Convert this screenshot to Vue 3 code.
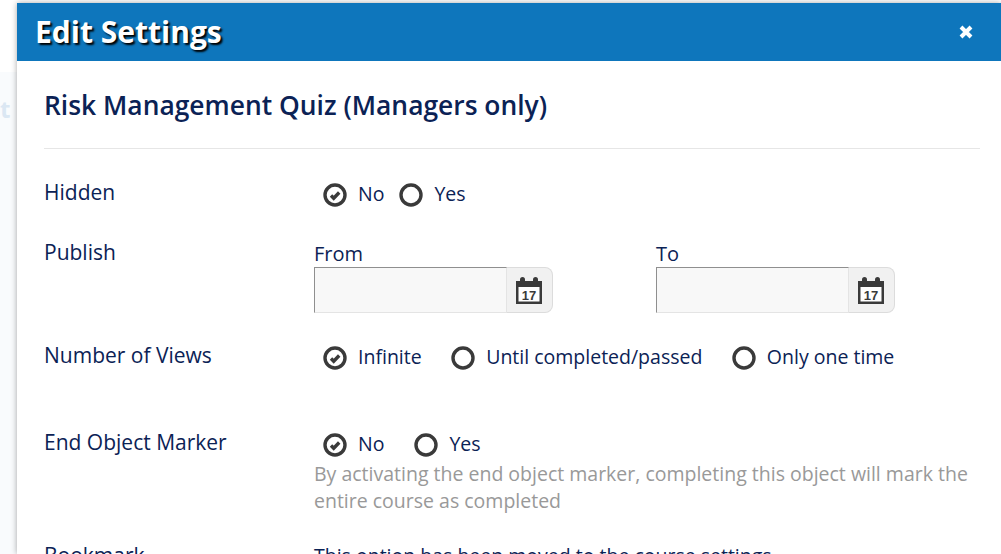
<script setup>
const views = [
  { label: 'Infinite', checked: true },
  { label: 'Until completed/passed', checked: false },
  { label: 'Only one time', checked: false }
]
</script>

<template>
  <div class="page">
    <div class="behind">
      <span class="behind-text">t</span>
    </div>
    <div class="modal">
      <header class="modal-head">
        <h1>Edit Settings</h1>
        <svg class="close" viewBox="0 0 16 16"><path d="M3 3l10 10M13 3L3 13" /></svg>
      </header>
      <div class="modal-body">
        <h2>Risk Management Quiz (Managers only)</h2>
        <hr>
        <div class="row row-hidden">
          <div class="label">Hidden</div>
          <div class="radios tight">
            <label class="radio"><svg class="ic" viewBox="0 0 24 24"><circle cx="12" cy="12" r="10" /><path d="M8 12.5l2.7 2.7 5.5-5.7" /></svg>No</label>
            <label class="radio"><svg class="ic" viewBox="0 0 24 24"><circle cx="12" cy="12" r="10" /></svg>Yes</label>
          </div>
        </div>
        <div class="row row-publish">
          <div class="label">Publish</div>
          <div class="dates">
            <div class="date">
              <div class="date-label">From</div>
              <div class="date-box">
                <div class="date-input"></div>
                <div class="date-btn">
                  <svg class="cal" viewBox="0 0 28 28">
                    <path class="cal-body" d="M1 5h26v23H1z" />
                    <rect x="5" y="1" width="5" height="7" rx="2.5" />
                    <rect x="18" y="1" width="5" height="7" rx="2.5" />
                    <rect class="cal-page" x="3.5" y="11" width="21" height="14.5" />
                    <text x="14" y="23.5" text-anchor="middle">17</text>
                  </svg>
                </div>
              </div>
            </div>
            <div class="date">
              <div class="date-label">To</div>
              <div class="date-box">
                <div class="date-input"></div>
                <div class="date-btn">
                  <svg class="cal" viewBox="0 0 28 28">
                    <path class="cal-body" d="M1 5h26v23H1z" />
                    <rect x="5" y="1" width="5" height="7" rx="2.5" />
                    <rect x="18" y="1" width="5" height="7" rx="2.5" />
                    <rect class="cal-page" x="3.5" y="11" width="21" height="14.5" />
                    <text x="14" y="23.5" text-anchor="middle">17</text>
                  </svg>
                </div>
              </div>
            </div>
          </div>
        </div>
        <div class="row row-views">
          <div class="label">Number of Views</div>
          <div class="radios wide">
            <label v-for="v in views" :key="v.label" class="radio">
              <svg class="ic" viewBox="0 0 24 24"><circle cx="12" cy="12" r="10" /><path v-if="v.checked" d="M8 12.5l2.7 2.7 5.5-5.7" /></svg>{{ v.label }}
            </label>
          </div>
        </div>
        <div class="row row-marker">
          <div class="label">End Object Marker</div>
          <div class="field">
            <div class="radios mid">
              <label class="radio"><svg class="ic" viewBox="0 0 24 24"><circle cx="12" cy="12" r="10" /><path d="M8 12.5l2.7 2.7 5.5-5.7" /></svg>No</label>
              <label class="radio"><svg class="ic" viewBox="0 0 24 24"><circle cx="12" cy="12" r="10" /></svg>Yes</label>
            </div>
            <p class="hint">By activating the end object marker, completing this object will mark the entire course as completed</p>
          </div>
        </div>
        <div class="row row-bookmark">
          <div class="label">Bookmark</div>
          <div class="field note">This option has been moved to the course settings</div>
        </div>
      </div>
    </div>
  </div>
</template>

<style>
html, body { margin: 0; overflow: hidden; background: #fff; }
</style>

<style scoped>
.page { position: relative; width: 1001px; height: 554px; overflow: hidden; background: #fff; font-family: "Open Sans", "Liberation Sans", sans-serif; color: #0b2255; padding-top: 3px; box-sizing: border-box; }
.behind { position: absolute; left: 0; top: 72px; width: 17px; height: 482px; background: #f9fbfd; }
.behind-text { position: absolute; left: 0; top: 23px; font-size: 24px; font-weight: 700; line-height: 28px; color: #dbe7f3; }
.modal { position: relative; margin-left: 17px; width: 984px; height: 551px; background: #fff; box-shadow: 0 0 6px rgba(0, 0, 0, 0.35); }
.modal-head { height: 58px; background: #0e76bc; display: flex; align-items: center; justify-content: space-between; padding: 0 27px 0 18px; box-sizing: border-box; }
.modal-head h1 { margin: 0; font-size: 30px; font-weight: 700; line-height: 58px; color: #fff; text-shadow: 2px 2px 2px #000; }
.close { width: 16px; height: 16px; fill: none; stroke: #fff; stroke-width: 4; }
.modal-body { padding: 27px 21px 0 27px; }
h2 { margin: 0; font-size: 26.4px; font-weight: 600; line-height: 34px; color: #0b2255; }
hr { border: 0; border-top: 1px solid #e6e6e6; margin: 26px 0 0 0; }
.row { display: flex; font-size: 19.5px; line-height: 27px; }
.label { width: 270px; flex: none; font-size: 21px; }
.row-hidden { margin-top: 30px; height: 60px; }
.row-publish { height: 103px; }
.row-views { height: 87px; }
.row-marker { height: 113px; }
.radios { display: flex; padding-left: 9px; padding-top: 1px; }
.radios.tight { gap: 15px; }
.radios.mid { gap: 30px; }
.radios.wide { gap: 29.5px; }
.radio { display: flex; align-items: center; gap: 11px; height: 27px; }
.ic { width: 24px; height: 24px; fill: none; stroke: #3a3a3a; stroke-width: 3.4; flex: none; margin-top: 3px; }
.dates { display: flex; gap: 103.5px; }
.date { width: 238.5px; }
.date-label { line-height: 27px; margin-top: 1px; font-size: 20px; }
.date-box { display: flex; height: 46px; }
.date-input { width: 193px; flex: none; box-sizing: border-box; background: #f8f8f8; border: 1px solid #e4e4e4; border-top-color: #8f8f8f; border-left-color: #8f8f8f; }
.date-btn { flex: 1; display: flex; align-items: center; justify-content: center; background: #f1f1f1; border: 1px solid #dcdcdc; border-left: 0; border-radius: 0 8px 8px 0; }
.cal { width: 28px; height: 28px; fill: #3a3a3a; }
.cal-body { fill: #3a3a3a; }
.cal-page { fill: #fff; }
.cal text { font-family: "Liberation Sans", sans-serif; font-size: 13px; font-weight: 700; fill: #3a3a3a; }
.hint { margin: 0; line-height: 27px; color: #999; padding-top: 3px; }
.field { flex: 1; }
</style>
